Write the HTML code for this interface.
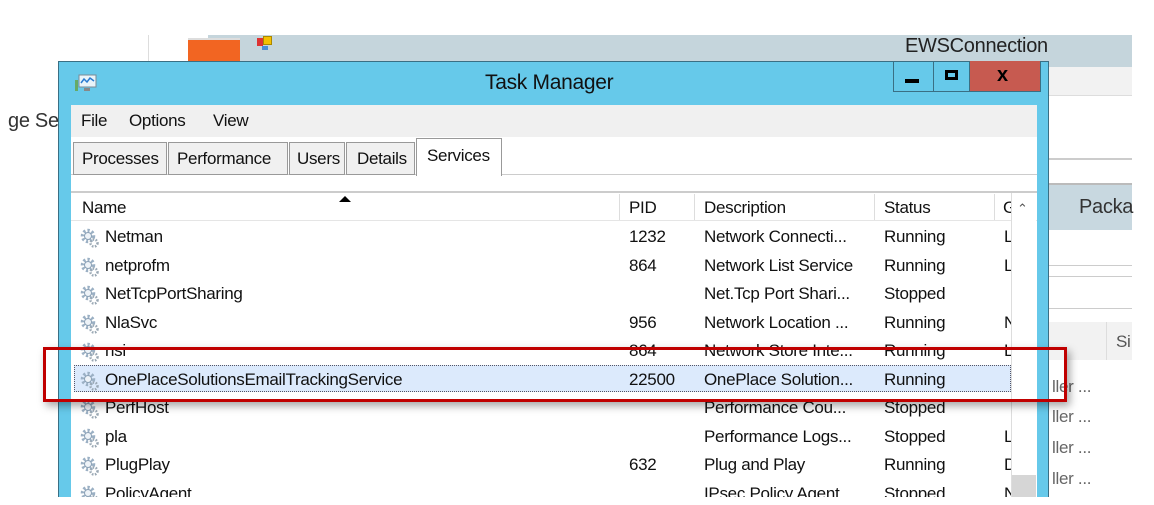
<!DOCTYPE html>
<html><head><meta charset="utf-8"><style>
*{margin:0;padding:0;box-sizing:border-box}
body{width:1154px;height:505px;background:#fff;position:relative;overflow:hidden;font-family:"Liberation Sans",sans-serif;color:#111;font-size:17px;letter-spacing:-0.3px}
.a{position:absolute;white-space:nowrap}
.g{position:absolute;width:20px;height:20px}
</style></head><body>
<div class="a" style="left:148px;top:35px;width:1px;height:30px;background:#ddd"></div>
<div class="a" style="left:208px;top:35px;width:924px;height:32px;background:#c5d5dc"></div>
<div class="a" style="left:188px;top:38px;width:52px;height:25px;background:#f26522;border-top:2px solid #ddd"></div>
<div class="a" style="left:257px;top:38px;width:6px;height:8px;background:#d33"></div>
<div class="a" style="left:263px;top:36px;width:9px;height:9px;background:#f5c000;border:1px solid #a80"></div>
<div class="a" style="left:262px;top:46px;width:6px;height:4px;background:#4a8ed8"></div>
<div class="a" style="left:905px;top:35px;font-size:20px;color:#222">EWSConnection</div>
<div class="a" style="left:1048px;top:67px;width:84px;height:28px;background:#f2f2f2"></div>
<div class="a" style="left:1048px;top:95px;width:84px;height:1px;background:#ddd"></div>
<div class="a" style="left:1048px;top:158px;width:84px;height:2px;background:#ccc"></div>
<div class="a" style="left:1048px;top:183px;width:84px;height:2px;background:#bbb"></div>
<div class="a" style="left:1048px;top:185px;width:84px;height:45px;background:#c8d8e0"></div>
<div class="a" style="left:1079px;top:196px;font-size:20px;color:#333">Packa</div>
<div class="a" style="left:1048px;top:265px;width:84px;height:1px;background:#ccc"></div>
<div class="a" style="left:1048px;top:276px;width:84px;height:1px;background:#ccc"></div>
<div class="a" style="left:1048px;top:308px;width:84px;height:1px;background:#ccc"></div>
<div class="a" style="left:1048px;top:322px;width:84px;height:38px;background:#f2f2f2"></div>
<div class="a" style="left:1106px;top:322px;width:1px;height:38px;background:#ddd"></div>
<div class="a" style="left:1116px;top:332px;color:#555">Si</div>
<div class="a" style="left:1052px;top:377px;color:#666">ller ...</div>
<div class="a" style="left:1052px;top:407px;color:#666">ller ...</div>
<div class="a" style="left:1052px;top:438px;color:#666">ller ...</div>
<div class="a" style="left:1052px;top:469px;color:#666">ller ...</div>
<div class="a" style="left:8px;top:110px;font-size:20px;color:#333">ge Se</div>
<div class="a" style="left:58px;top:61px;width:991px;height:440px;background:#66c9ea;border:1px solid #3a6f84"></div>
<svg class="a" style="left:74px;top:73px" width="24" height="22"><rect x="5" y="2" width="17" height="12" fill="#e8f4fa" stroke="#7a8a96"/><polyline points="7,10 10,6 13,9 16,5 20,8" fill="none" stroke="#2a7bd0" stroke-width="1.5"/><rect x="10" y="15" width="6" height="3" fill="#888"/><rect x="1" y="7" width="3" height="11" fill="#6a6"/></svg>
<div class="a" style="left:485px;top:71px;font-size:21px;color:#111">Task Manager</div>
<div class="a" style="left:893px;top:61px;width:148px;height:31px;border:1px solid #3a6f84;border-top:none"></div>
<div class="a" style="left:933px;top:61px;width:1px;height:31px;background:#3a6f84"></div>
<div class="a" style="left:969px;top:61px;width:72px;height:31px;background:#c75a50;border:1px solid #3a6f84;border-top:none"></div>
<div class="a" style="left:905px;top:79px;width:14px;height:4px;background:#000"></div>
<div class="a" style="left:945px;top:70px;width:13px;height:10px;border:3px solid #000"></div>
<div class="a" style="left:997px;top:64px;font-size:20px;font-weight:bold;color:#000">x</div>
<div class="a" style="left:71px;top:105px;width:966px;height:400px;background:#fff"></div>
<div class="a" style="left:71px;top:105px;width:966px;height:32px;background:#f0f0f0"></div>
<div class="a" style="left:81px;top:111px">File</div>
<div class="a" style="left:129px;top:111px">Options</div>
<div class="a" style="left:213px;top:111px">View</div>
<div class="a" style="left:71px;top:174px;width:966px;height:1px;background:#ccc"></div>
<div class="a" style="left:71px;top:191px;width:966px;height:2px;background:#ccc"></div>
<div class="a" style="left:73px;top:142px;width:94px;height:33px;background:#f0f0f0;border:1px solid #999"></div>
<div class="a" style="left:82px;top:149px">Processes</div>
<div class="a" style="left:168px;top:142px;width:120px;height:33px;background:#f0f0f0;border:1px solid #999"></div>
<div class="a" style="left:177px;top:149px">Performance</div>
<div class="a" style="left:289px;top:142px;width:56px;height:33px;background:#f0f0f0;border:1px solid #999"></div>
<div class="a" style="left:297px;top:149px">Users</div>
<div class="a" style="left:346px;top:142px;width:69px;height:33px;background:#f0f0f0;border:1px solid #999"></div>
<div class="a" style="left:357px;top:149px">Details</div>
<div class="a" style="left:416px;top:138px;width:86px;height:38px;background:#fff;border:1px solid #999;border-bottom:none"></div>
<div class="a" style="left:427px;top:146px">Services</div>
<div class="a" style="left:71px;top:193px;width:966px;height:28px;border-bottom:1px solid #e5e5e5"></div>
<div class="a" style="left:82px;top:198px">Name</div>
<div class="a" style="left:339px;top:196px;width:0;height:0;border-left:6px solid transparent;border-right:6px solid transparent;border-bottom:6px solid #000"></div>
<div class="a" style="left:619px;top:194px;width:1px;height:26px;background:#ddd"></div>
<div class="a" style="left:629px;top:198px">PID</div>
<div class="a" style="left:694px;top:194px;width:1px;height:26px;background:#ddd"></div>
<div class="a" style="left:704px;top:198px">Description</div>
<div class="a" style="left:874px;top:194px;width:1px;height:26px;background:#ddd"></div>
<div class="a" style="left:884px;top:198px">Status</div>
<div class="a" style="left:994px;top:194px;width:1px;height:26px;background:#ddd"></div>
<div class="a" style="left:1003px;top:198px;width:8px;overflow:hidden">G</div>
<div class="a" style="left:1011px;top:193px;width:25px;height:312px;background:#fff;border-left:1px solid #ddd"></div>
<div class="a" style="left:1017px;top:201px;font-size:13px;color:#555">&#8963;</div>
<div class="a" style="left:1012px;top:475px;width:24px;height:30px;background:#d6d6d6"></div>
<div class="a" style="left:74px;top:365px;width:937px;height:27px;background:#dceafc;border:1px dotted #556"></div>
<svg width="0" height="0" style="position:absolute"><defs><g id="gr"><circle cx="8" cy="8" r="5.5" fill="none" stroke="#9bb0c4" stroke-width="3.5" stroke-dasharray="2.2 2"/><circle cx="8" cy="8" r="3.5" fill="#eef3f8" stroke="#8aa0b5" stroke-width="1"/><circle cx="14" cy="15" r="3.5" fill="none" stroke="#9aa8b4" stroke-width="2.5" stroke-dasharray="1.6 1.4"/></g></defs></svg>
<div id="rows"></div>
<script>
var r=[["Netman","1232","Network Connecti...","Running","L"],["netprofm","864","Network List Service","Running","L"],["NetTcpPortSharing","","Net.Tcp Port Shari...","Stopped",""],["NlaSvc","956","Network Location ...","Running","N"],["nsi","864","Network Store Inte...","Running","L"],["OnePlaceSolutionsEmailTrackingService","22500","OnePlace Solution...","Running",""],["PerfHost","","Performance Cou...","Stopped",""],["pla","","Performance Logs...","Stopped","L"],["PlugPlay","632","Plug and Play","Running","D"],["PolicyAgent","","IPsec Policy Agent","Stopped","N"]];
var h="";r.forEach(function(x,i){var y=227+i*28.5;
h+='<svg class="g" style="left:80px;top:'+(y+1)+'px" width="20" height="20"><use href="#gr"/></svg>';
h+='<div class="a" style="left:105px;top:'+y+'px">'+x[0]+'</div><div class="a" style="left:629px;top:'+y+'px">'+x[1]+'</div><div class="a" style="left:704px;top:'+y+'px">'+x[2]+'</div><div class="a" style="left:884px;top:'+y+'px">'+x[3]+'</div><div class="a" style="left:1004px;top:'+y+'px;width:7px;overflow:hidden">'+x[4]+'</div>';});
document.getElementById("rows").innerHTML=h;
</script>
<div class="a" style="left:0;top:497px;width:1154px;height:8px;background:#fff"></div>
<div class="a" style="left:43px;top:347px;width:1024px;height:55px;border:3px solid #c00000;box-shadow:3px 4px 8px rgba(0,0,0,0.35)"></div>
</body></html>
